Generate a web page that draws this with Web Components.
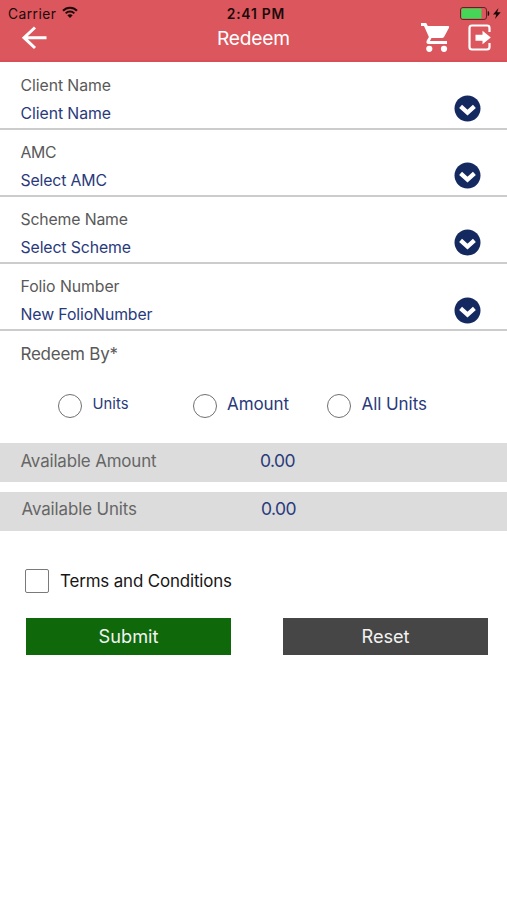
<!DOCTYPE html>
<html lang="en"><head><meta charset="utf-8"><title>Redeem</title>
<style>
html,body{margin:0;background:#fff;font-family:Inter,"Liberation Sans",sans-serif;}
</style></head><body>
<redeem-screen></redeem-screen>
<script>
function define(name, html, init) {
  const t = document.createElement('template');
  t.innerHTML = html;
  customElements.define(name, class extends HTMLElement {
    connectedCallback() {
      if (this.shadowRoot) return;
      const root = this.attachShadow({mode: 'open'});
      root.append(t.content.cloneNode(true));
      if (init) init(this, root);
    }
  });
}

// One line of text; "w" tracks the letters out to a given advance width.
define('ui-text', `<style>:host{display:block;white-space:nowrap;flex:none}span{display:inline-block}</style><span></span>`, (el, root) => {
  const s = root.querySelector('span');
  s.textContent = el.getAttribute('text');
  s.style.fontSize = el.getAttribute('size') + 'px';
  const w = parseFloat(el.getAttribute('w'));
  if (w) s.style.letterSpacing = (w - s.getBoundingClientRect().width) / (s.textContent.length - 1) + 'px';
  if (w) s.style.width = w + 'px';
});

define('app-header', `<style>
:host{display:block;height:62px;box-sizing:border-box;background:linear-gradient(#db575d 60px,#d94f57 60px);color:#fff}
.status{display:grid;grid-template-columns:1fr auto 1fr;height:26px;line-height:27px;color:#1c0a0b}
.left{display:flex;padding-left:8px;gap:6px}.time{font-weight:600;padding-left:4px}
.right{display:flex;justify-content:flex-end;padding:6px 5px 0 0}
.nav{display:grid;grid-template-columns:1fr auto 1fr;height:36px;line-height:25px}
.back{padding:0 0 0 21px}.icons{display:flex;justify-content:flex-end;padding-right:15px;gap:17px}
svg{display:block;flex:none}
</style>
<div class="status"><div class="left"><ui-text text="Carrier" size="13.8" w="48"></ui-text>
<svg style="margin-top:6px" width="16" height="13" viewBox="0 0 16 13" fill="none" stroke="#1c0a0b" stroke-width="2"><path d="M1 4.7C4.8 .6 11.2 .6 15 4.7M3.7 7.4C6 5 10 5 12.3 7.4"/><path d="M8 12L5.3 9.3Q8 7 10.7 9.3Z" fill="#1c0a0b" stroke="none"/></svg></div>
<ui-text class="time" style="font-weight:600" text="2:41 PM" size="13.8" w="57.500"></ui-text>
<div class="right"><svg width="43" height="15" viewBox="0 0 43 15"><rect x="1.5" y="1.5" width="26" height="12" rx="2.5" fill="none" stroke="#5c2426"/><rect x="2.5" y="2.5" width="20" height="10" rx="1" fill="#46d657"/><path d="M28.7 5.2h.8c1 .4 1 4.2 0 4.600h-.8z" fill="#1c0a0b"/><path d="M39.500 2L34 8.600h3.300L36 13l5.700-6.800h-3.500z" fill="#1c0a0b"/></svg></div></div>
<div class="nav"><svg class="back" width="27" height="24" viewBox="0 0 27 24" fill="none" stroke="#fff" stroke-width="3"><path d="M14 1.500L3 11.700L14 22M3 11.700H25.500"/></svg>
<ui-text text="Redeem" size="19.200" w="73"></ui-text>
<div class="icons"><svg width="31" height="32" viewBox="0 0 31 32" style="margin-top:-5px" fill="#fff"><path d="M1 2H6.200L7.800 5H28.200Q29.700 5.200 29 6.800L24.300 15.500Q23.500 17 21.900 17H11.500L9.900 20H27V23H8.500Q5.700 22.500 6.700 19.700L8.900 15.900L4 5H1Z"/><circle cx="9.300" cy="27.800" r="3.100"/><circle cx="24" cy="27.800" r="3.100"/></svg>
<svg width="24" height="27" viewBox="0 0 24 27" style="margin-top:-2px" fill="none" stroke="#fff" stroke-width="2.200"><path d="M21.500 8V4Q21.500 1.500 19 1.500H4Q1.500 1.500 1.500 4V23Q1.500 25.500 4 25.500H19Q21.500 25.500 21.500 23V19"/><path d="M7.500 10.700H14.500V6.800L22.800 13.600L14.500 20.300V16.700H7.500Z" fill="#fff" stroke="none"/></svg></div></div>`);

define('select-row', `<style>
:host{display:flex;justify-content:space-between;box-sizing:border-box;height:67.2px;padding:8px 26px 0 20.500px;border-bottom:2px solid #ccc;line-height:28px}
.l{color:#595959}.v{color:#293a7b;line-height:26px}svg{display:block;margin-top:24.500px}
</style><div><ui-text class="l" size="15.500"></ui-text><ui-text class="v" size="15.500"></ui-text></div>
<svg width="27" height="27" viewBox="0 0 27 27"><circle cx="13.500" cy="13.500" r="13" fill="#14295f"/><path d="M6.600 11.300L13.500 17.600L20.400 11.300" fill="none" stroke="#fff" stroke-width="4.300" stroke-linecap="butt"/></svg>`, (el, root) => {
  for (const k of ['l', 'v']) {
    const n = root.querySelector('.' + k), t = document.createElement('ui-text');
    t.className = k;
    t.setAttribute('size', '15.8');
    t.setAttribute('text', el.getAttribute(k === 'l' ? 'label' : 'value'));
    t.setAttribute('w', el.getAttribute(k + 'w'));
    n.replaceWith(t);
  }
});

define('radio-option', `<style>:host{display:flex;gap:10.500px;line-height:22px;color:#293a7b}
i{box-sizing:border-box;width:24px;height:24px;border:1.700px solid #707070;border-radius:50%;margin-top:1px;flex:none}</style><i></i><slot></slot>`);

define('balance-row', `<style>:host{display:grid;grid-template-columns:239.500px 1fr;box-sizing:border-box;height:39px;background:#dcdcdc;color:#666;line-height:36px;padding-left:20.500px}
::slotted([slot=value]){color:#293a7b}</style><slot></slot><slot name="value"></slot>`);

define('check-option', `<style>:host{display:flex;gap:11px;color:#161616;line-height:24px}
i{box-sizing:border-box;width:24px;height:24px;border:1.500px solid #7a7a7a;border-radius:2px;flex:none}</style><i></i><slot></slot>`);

define('action-button', `<style>:host{display:flex;justify-content:center;box-sizing:border-box;height:37px;line-height:37px;color:#f2f2f2;background:#0f690a}
:host([kind=reset]){background:#464646}</style><slot></slot>`);

define('redeem-screen', `<style>
:host{display:block;width:507px;height:900px;overflow:hidden;background:#fff}
.fields{padding-top:.5px}
.by{color:#595959;padding-left:20.500px;height:61.500px;line-height:46px;box-sizing:border-box}
.radios{display:grid;grid-template-columns:134.500px 134.500px 1fr;padding-left:58px;height:50.200px}
.balances{display:grid;gap:10px}
.terms{padding:38px 0 0 25px;height:87px;box-sizing:border-box}
.actions{display:grid;grid-template-columns:205px 205px;gap:52px;padding-left:26px}
</style>
<app-header></app-header>
<div class="fields">
<select-row label="Client Name" value="Client Name" lw="90.500" vw="90.500"></select-row>
<select-row label="AMC" value="Select AMC" lw="36" vw="86.500"></select-row>
<select-row label="Scheme Name" value="Select Scheme" lw="107.500" vw="110.500"></select-row>
<select-row label="Folio Number" value="New FolioNumber" lw="99" vw="132"></select-row>
</div>
<div class="by"><ui-text text="Redeem By*" size="17" w="97.500"></ui-text></div>
<div class="radios">
<radio-option style="line-height:21px"><ui-text text="Units" size="14.800" w="36"></ui-text></radio-option>
<radio-option><ui-text text="Amount" size="17" w="62"></ui-text></radio-option>
<radio-option><ui-text text="All Units" size="17" w="65.500"></ui-text></radio-option></div>
<div class="balances">
<balance-row><ui-text text="Available Amount" size="16.900" w="136"></ui-text><ui-text slot="value" text="0.00" size="17.500" w="35.500"></ui-text></balance-row>
<balance-row style="padding-left:21.500px;line-height:34px"><ui-text text="Available Units" size="16.900" w="115.500"></ui-text><ui-text slot="value" text="0.00" size="17.500" w="35.500"></ui-text></balance-row></div>
<div class="terms"><check-option><ui-text text="Terms and Conditions" size="16.900" w="172"></ui-text></check-option></div>
<div class="actions"><action-button><ui-text text="Submit" size="18.200" w="60"></ui-text></action-button><action-button kind="reset"><ui-text text="Reset" size="18.200" w="48"></ui-text></action-button></div>`);
</script></body></html>
